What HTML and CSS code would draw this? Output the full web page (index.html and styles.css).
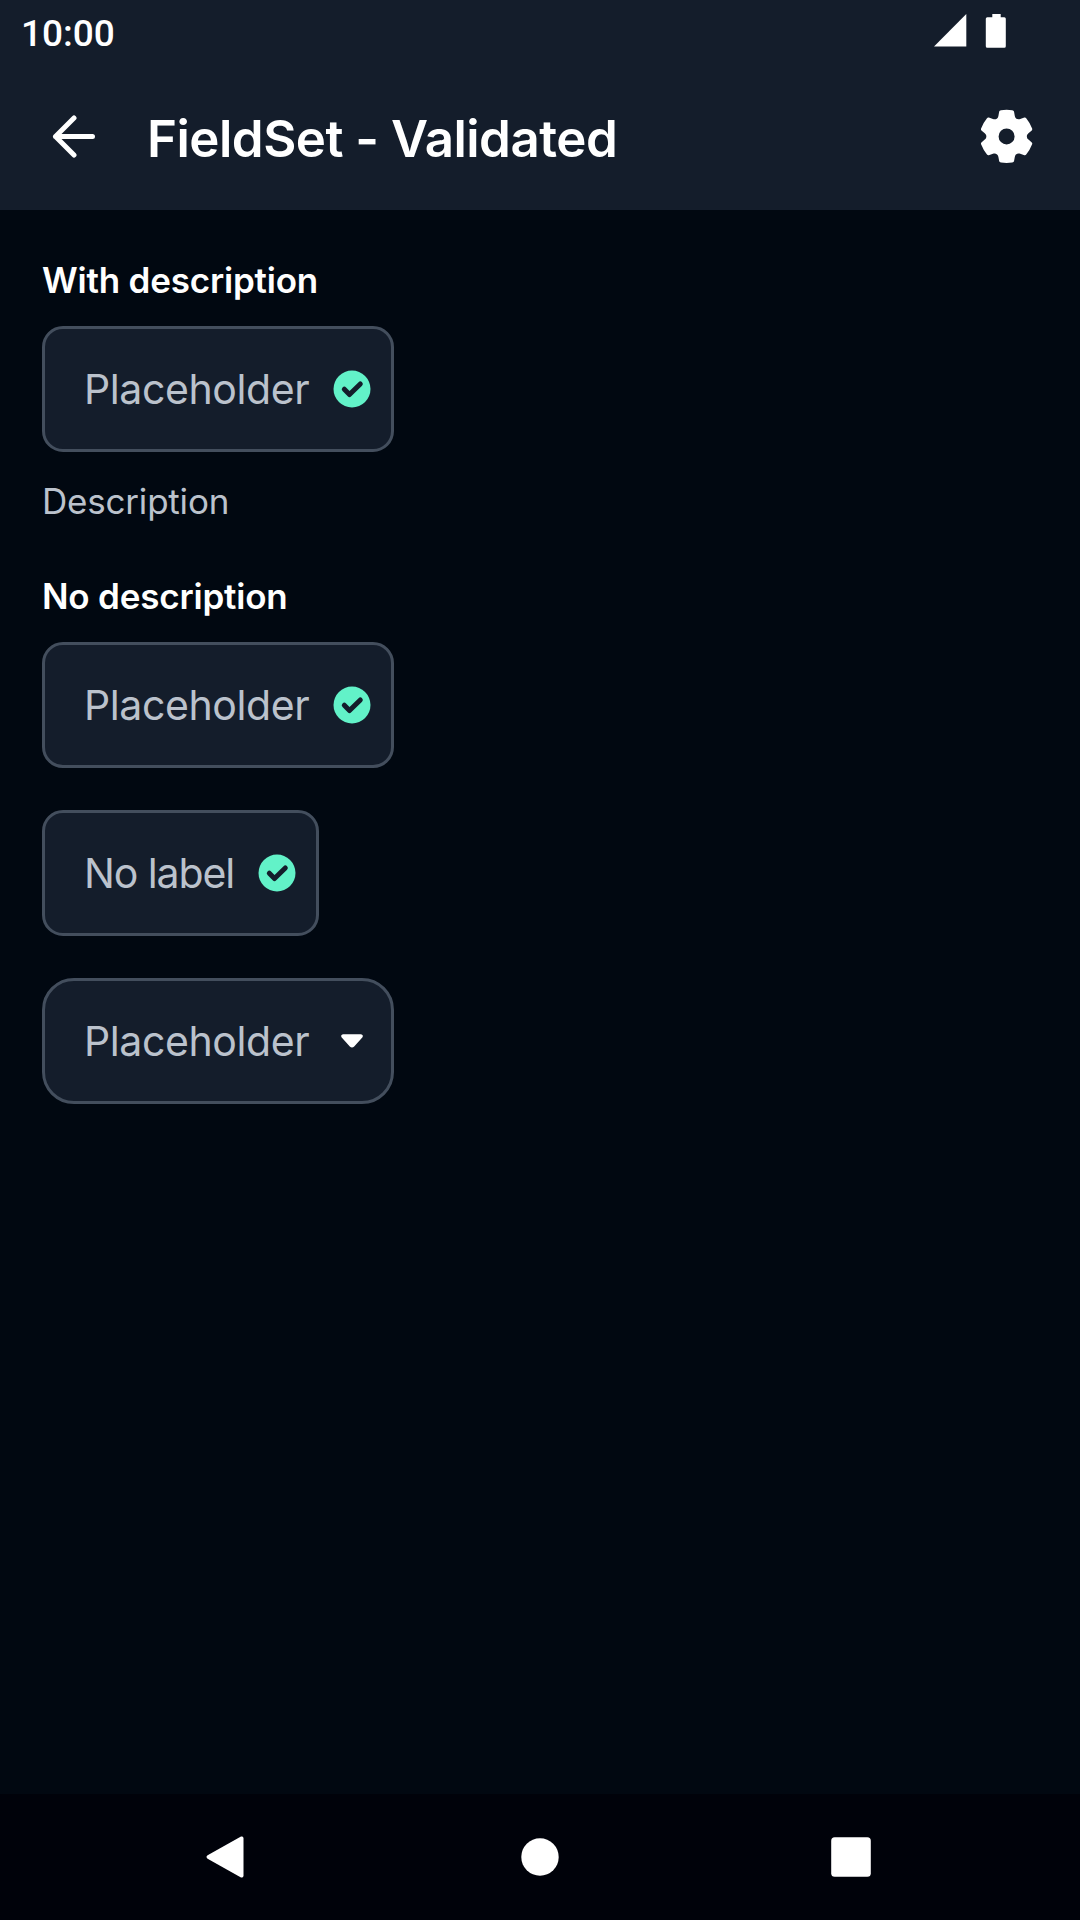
FILE: index.html
```
<!DOCTYPE html>
<html lang="en">
<head>
<meta charset="utf-8">
<title>FieldSet - Validated</title>
<link rel="stylesheet" href="styles.css">
</head>
<body>
<div class="screen">
  <header class="header">
    <div class="status-bar">
      <span class="clock">10:00</span>
      <svg class="status-icons" width="73" height="36" viewBox="0 0 73 36" fill="#fff">
        <path d="M0 33.500 32.300 1v32.500z"/>
        <path d="M58.300 1h8.400v3.300h3.600a1.500 1.500 0 0 1 1.500 1.500v27.400a1.500 1.500 0 0 1-1.500 1.500H53.300a1.500 1.500 0 0 1-1.500-1.500V5.800a1.500 1.500 0 0 1 1.500-1.500h5z"/>
      </svg>
    </div>
    <div class="toolbar">
      <svg class="back" width="44" height="44" viewBox="0 -0.500 44 44" fill="none" stroke="#fff" stroke-width="5" stroke-linecap="round" stroke-linejoin="round">
        <path d="M40.500 22H3.500M22 3.500 3.500 22 22 40.500"/>
      </svg>
      <h1 class="title">FieldSet - Validated</h1>
      <svg class="gear" width="54" height="54" viewBox="-26.600 -27.400 54 54" fill="#fff">
        <path fill-rule="evenodd" d="M-8.200-20.500-7.400-24.800Q-7.200-25.900-5.600-26.100 0-27 5.600-26.100 7.200-25.900 7.400-24.800L8.200-20.500C8.600-17.800 11.100-16.350 13.650-17.350L17.780-18.810Q18.830-19.190 19.800-17.900 23.380-13.500 25.400-8.200 26.030-6.710 25.180-5.990L21.850-3.150C19.710-1.450 19.710 1.450 21.850 3.150L25.180 5.990Q26.030 6.710 25.400 8.200 23.380 13.500 19.800 17.900 18.830 19.190 17.780 18.810L13.650 17.350C11.100 16.350 8.600 17.800 8.200 20.500L7.400 24.800Q7.200 25.900 5.600 26.100 0 27-5.600 26.100-7.200 25.900-7.400 24.800L-8.200 20.500C-8.600 17.800-11.100 16.350-13.650 17.350L-17.780 18.810Q-18.830 19.190-19.800 17.900-23.380 13.500-25.400 8.200-26.030 6.710-25.180 5.990L-21.850 3.150C-19.710 1.450-19.710-1.450-21.850-3.150L-25.180-5.990Q-26.030-6.710-25.400-8.200-23.380-13.500-19.800-17.900-18.830-19.190-17.780-18.810L-13.650-17.350C-11.100-16.350-8.600-17.800-8.200-20.500ZM8 0A8 8 0 1 0-8 0 8 8 0 1 0 8 0Z"/>
      </svg>
    </div>
  </header>

  <main class="content">
    <section class="fieldset">
      <h2 class="label">With description</h2>
      <div class="field">
        <span class="placeholder">Placeholder</span>
        <svg class="icon" viewBox="0 0 42 42"><circle cx="21" cy="21" r="18.500" fill="#62f2c8"/><path d="m13.300 21.200 5.200 5.300L29.300 16" fill="none" stroke="#141d2b" stroke-width="5" stroke-linecap="round" stroke-linejoin="round"/></svg>
      </div>
      <p class="description">Description</p>
    </section>

    <section class="fieldset">
      <h2 class="label">No description</h2>
      <div class="field">
        <span class="placeholder">Placeholder</span>
        <svg class="icon" viewBox="0 0 42 42"><circle cx="21" cy="21" r="18.500" fill="#62f2c8"/><path d="m13.300 21.200 5.200 5.300L29.300 16" fill="none" stroke="#141d2b" stroke-width="5" stroke-linecap="round" stroke-linejoin="round"/></svg>
      </div>
    </section>

    <div class="field field-short">
      <span class="placeholder">No label</span>
      <svg class="icon" viewBox="0 0 42 42"><circle cx="21" cy="21" r="18.500" fill="#62f2c8"/><path d="m13.300 21.200 5.200 5.300L29.300 16" fill="none" stroke="#141d2b" stroke-width="5" stroke-linecap="round" stroke-linejoin="round"/></svg>
    </div>

    <div class="field field-select">
      <span class="placeholder">Placeholder</span>
      <svg class="icon" viewBox="0 0 42 42"><path d="M12 14.200h18q2.600.6 1.500 3l-8.300 9.300q-2.200 2-4.400 0l-8.300-9.300q-1.100-2.400 1.500-3z" fill="#fff"/></svg>
    </div>
  </main>

  <nav class="nav-bar">
    <svg class="nav-icon" viewBox="0 0 42 42"><path d="M37 0.600q2.500-.9 2.500 1.900v37q0 2.800-2.500 1.900L3.600 22.700q-2.200-1.700 0-3.400z"/></svg>
    <svg class="nav-icon nav-home" viewBox="0 0 42 42"><circle cx="21" cy="21" r="18.700"/></svg>
    <svg class="nav-icon" viewBox="0 0 42 42"><rect x="1.200" y="1.200" width="39.600" height="39.600" rx="3.500"/></svg>
  </nav>
</div>
</body>
</html>
```
FILE: styles.css
```
* {
  box-sizing: border-box;
}

body,
h1,
h2,
p {
  margin: 0;
}

body {
  background: #010811;
  color: #fff;
  font-family: Inter, "Liberation Sans", sans-serif;
}

.screen {
  display: flex;
  flex-direction: column;
  width: 1080px;
  height: 1920px;
}

.header {
  height: 210px;
  background: #141d2b;
}

.status-bar {
  display: flex;
  justify-content: space-between;
  height: 63px;
  padding: 13px 73px 0 21px;
}

.clock {
  margin-top: 1px;
  font: 500 37px/40px Roboto, sans-serif;
}

.toolbar {
  display: flex;
  align-items: center;
  height: 147px;
  padding: 0 46px 0 52px;
}

.back,
.gear {
  margin-top: -1px;
}

.title {
  margin: 5px auto 0 51px;
  font-size: 51px;
  line-height: 64px;
  font-weight: 600;
  letter-spacing: -0.5px;
  white-space: nowrap;
}

.content {
  display: flex;
  flex: 1;
  flex-direction: column;
  align-items: flex-start;
  gap: 42px;
  padding: 46px 42px 0;
}

.label {
  margin-bottom: 22px;
  font-size: 35px;
  line-height: 48px;
  font-weight: 600;
  letter-spacing: -0.2px;
  white-space: nowrap;
}

.description {
  margin-top: 20px;
  color: #bbc2cc;
  font-size: 35px;
  line-height: 58px;
  font-weight: 400;
  letter-spacing: -0.2px;
}

.field {
  display: flex;
  align-items: center;
  justify-content: space-between;
  width: 352px;
  height: 126px;
  padding: 0 18px 0 39px;
  border: 3px solid #434e5d;
  border-radius: 21px;
  background: #141d2b;
}

.field-short {
  width: 277px;
}

.field-select {
  border-radius: 32px;
}

.placeholder {
  color: #bbc2cc;
  font-size: 41px;
  font-weight: 400;
  letter-spacing: -0.4px;
  white-space: nowrap;
}

.field-short .placeholder {
  letter-spacing: -1.1px;
}

.icon {
  flex: none;
  width: 42px;
  height: 42px;
}

.nav-bar {
  display: flex;
  justify-content: space-between;
  align-items: center;
  height: 126px;
  padding: 0 208px 0 204px;
  background: #00020a;
}

.nav-icon {
  width: 42px;
  height: 42px;
  fill: #fff;
}

.nav-home {
  margin-left: 4px;
}
```
